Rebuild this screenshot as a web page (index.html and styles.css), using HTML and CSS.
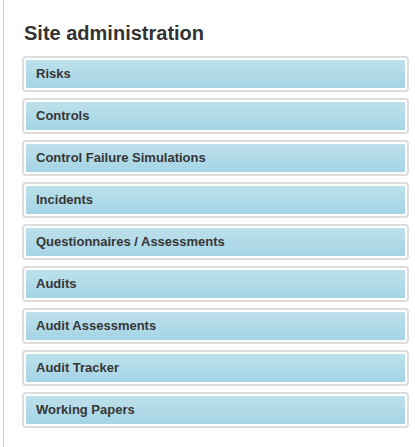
FILE: index.html
```html
<!DOCTYPE html>
<html>
<head>
<meta charset="utf-8">
<link rel="stylesheet" href="styles.css">
</head>
<body>
<div class="page">
  <h2 class="title">Site administration</h2>
  <ul class="menu">
    <li class="item"><span class="bar">Risks</span></li>
    <li class="item"><span class="bar">Controls</span></li>
    <li class="item"><span class="bar">Control Failure Simulations</span></li>
    <li class="item"><span class="bar">Incidents</span></li>
    <li class="item"><span class="bar">Questionnaires / Assessments</span></li>
    <li class="item"><span class="bar">Audits</span></li>
    <li class="item"><span class="bar">Audit Assessments</span></li>
    <li class="item"><span class="bar">Audit Tracker</span></li>
    <li class="item"><span class="bar">Working Papers</span></li>
  </ul>
</div>
</body>
</html>
```

FILE: styles.css
```css
html, body {
  margin: 0;
  padding: 0;
  background: #ffffff;
}
body {
  font-family: "Liberation Sans", Arial, sans-serif;
  color: #333333;
}
.page {
  margin-left: 3px;
  border-left: 1px solid #cfcfcf;
  min-height: 447px;
  padding: 21px 6px 0 18px;
  box-sizing: border-box;
}
.title {
  margin: 0 0 11px 2px;
  font-size: 20px;
  line-height: 24px;
  font-weight: bold;
  color: #333333;
}
.menu {
  list-style: none;
  margin: 0;
  padding: 0;
  display: flex;
  flex-direction: column;
  gap: 6px;
}
.item {
  border: 2px solid #dddddd;
  border-radius: 4px;
  padding: 2px;
  background: #ffffff;
}
.bar {
  display: block;
  height: 28px;
  line-height: 28px;
  padding-left: 10px;
  font-size: 13px;
  font-weight: bold;
  color: #363636;
  background: linear-gradient(to bottom, #bde0eb, #a5d4e5);
  border-radius: 1px;
}
```
